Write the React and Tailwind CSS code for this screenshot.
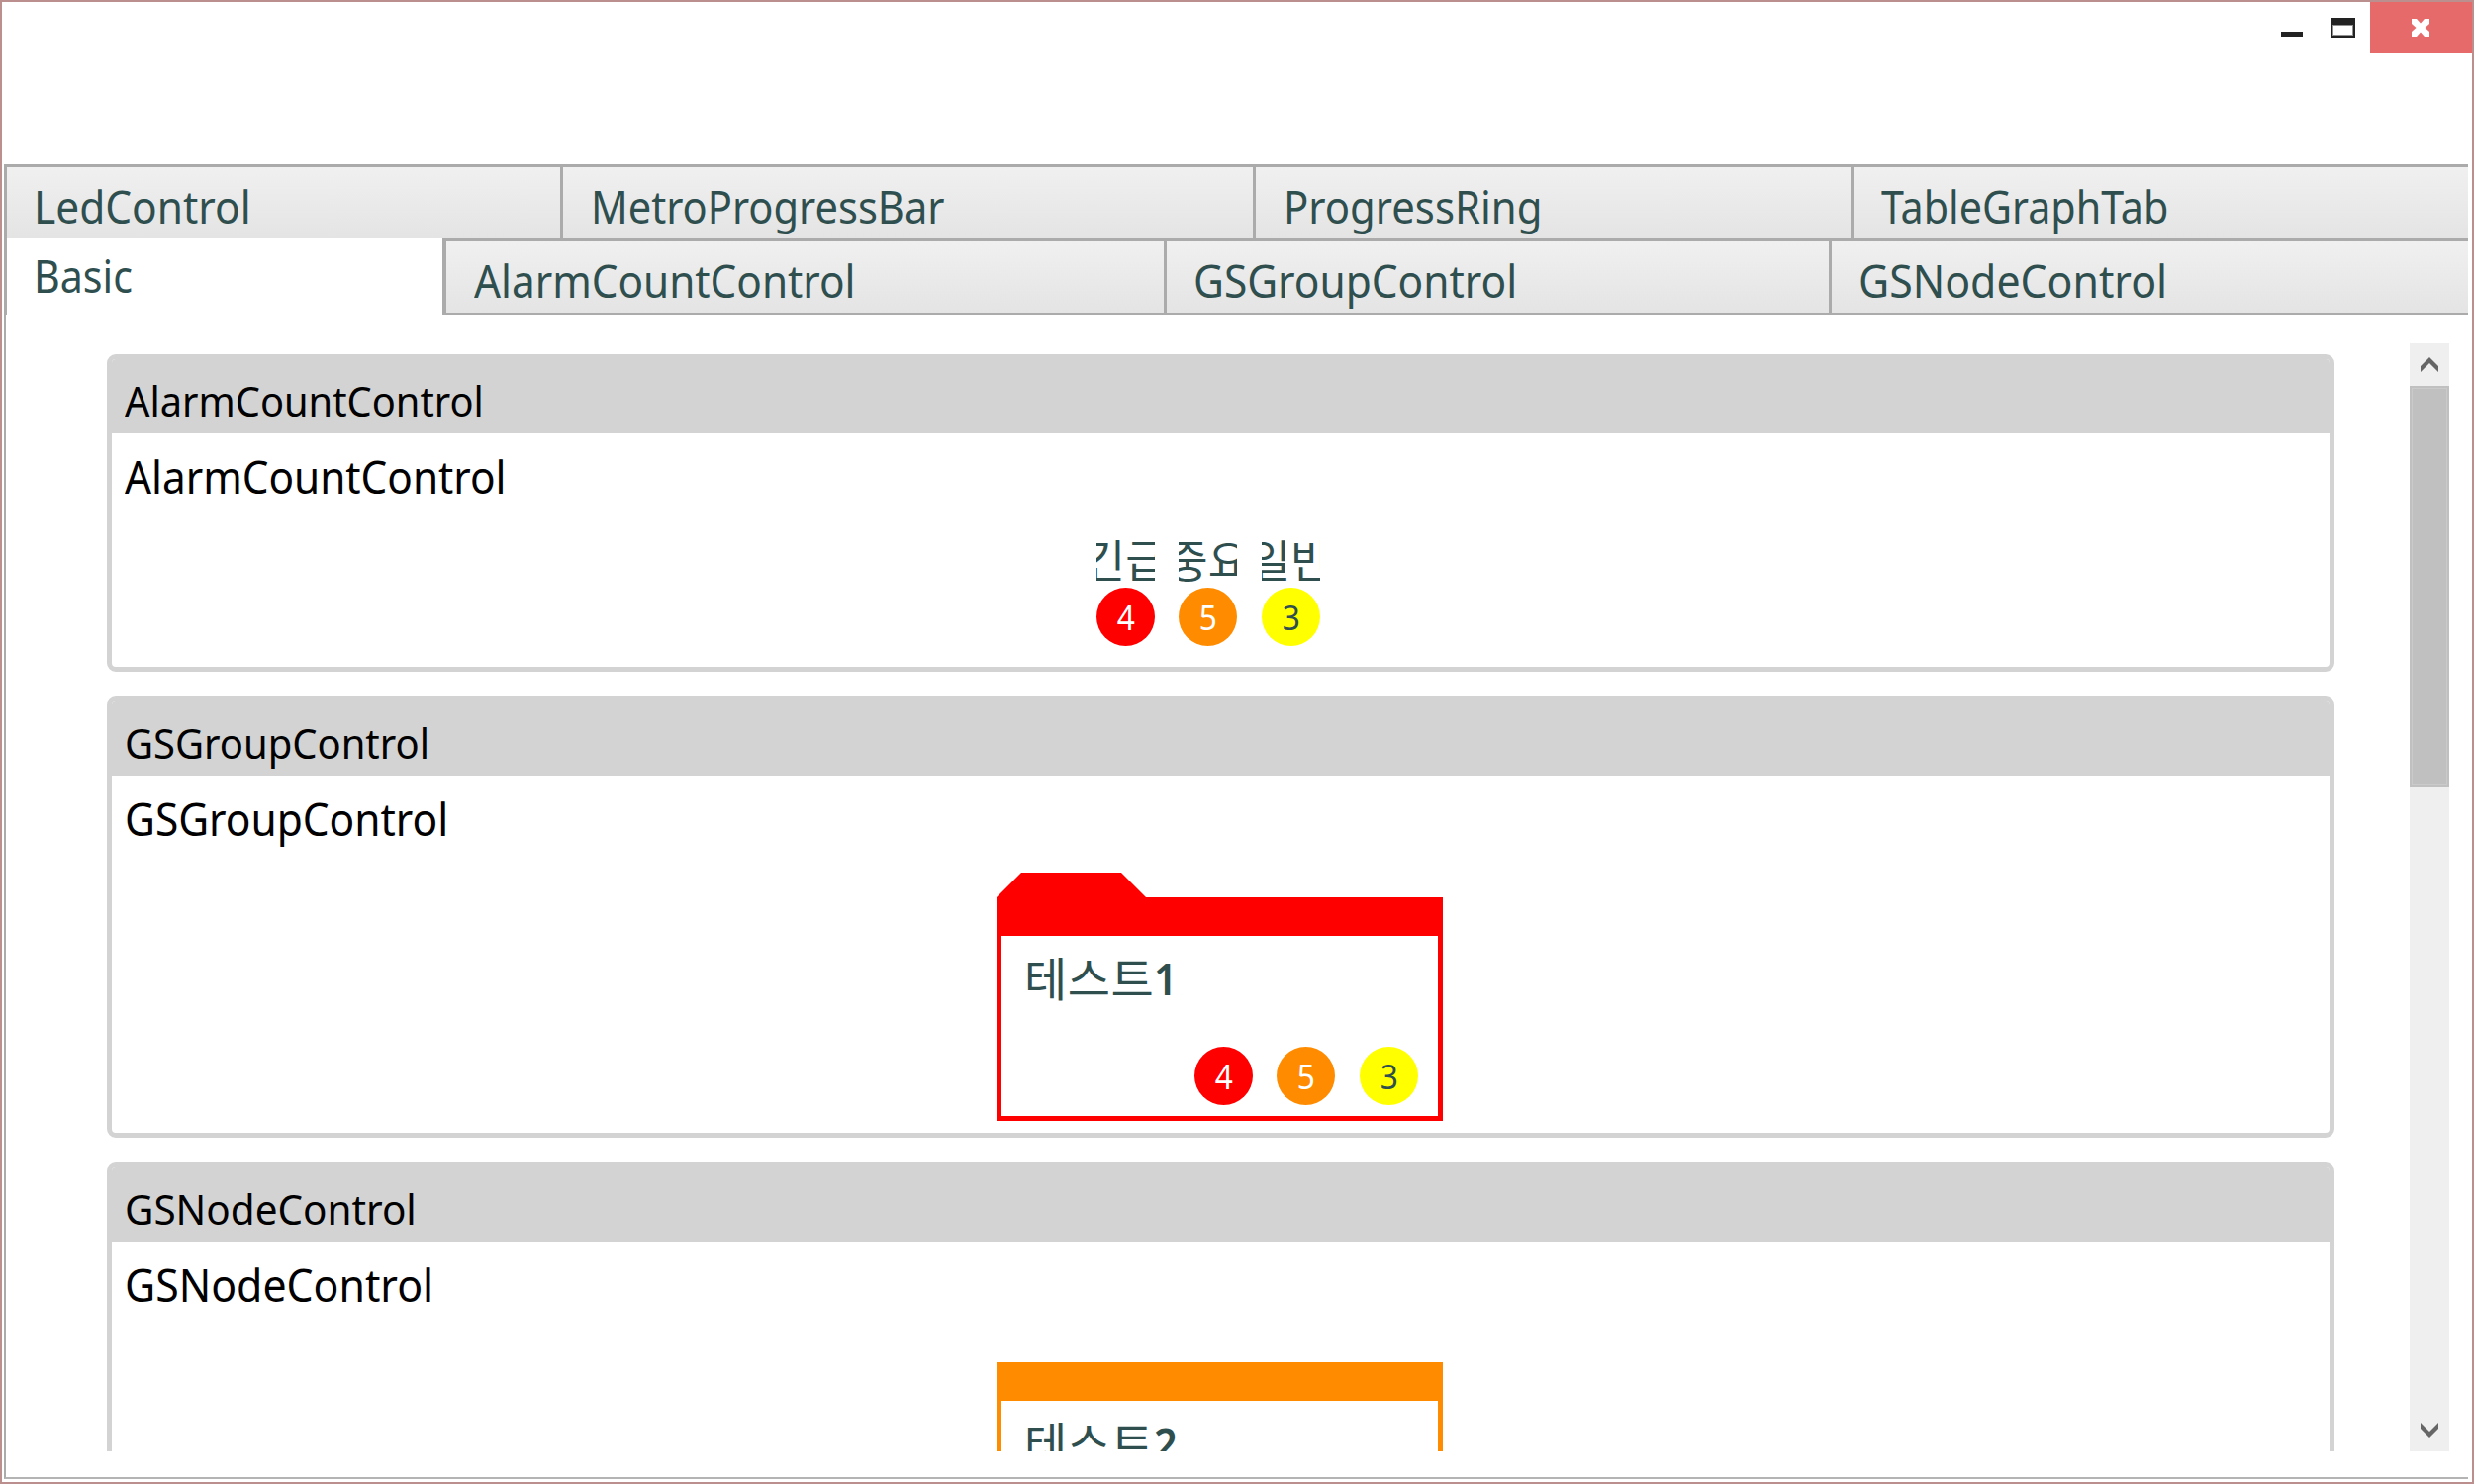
const rowOne = [
  { label: "LedControl", width: "w-[559px]", text: "ml-[27px] scale-x-[0.943]", edge: "" },
  { label: "MetroProgressBar", width: "w-[700px]", text: "ml-[28px] scale-x-[0.925]", edge: "border-l-[3px]" },
  { label: "ProgressRing", width: "w-[604px]", text: "ml-[28px] scale-x-[0.93]", edge: "border-l-[3px]" },
  { label: "TableGraphTab", width: "flex-1", text: "ml-[28px] scale-x-[0.916]", edge: "border-l-[3px]" },
];

const rowTwo = [
  { label: "AlarmCountControl", width: "w-[729px]", text: "ml-[28px] scale-x-[0.94]", edge: "border-l-4" },
  { label: "GSGroupControl", width: "w-[672px]", text: "ml-[27px] scale-x-[0.943]", edge: "border-l-[3px]" },
  { label: "GSNodeControl", width: "flex-1", text: "ml-[27px] scale-x-[0.951]", edge: "border-l-[3px]" },
];

const alarms = [
  { label: "긴급", count: 4, color: "bg-[#ff0000] text-white" },
  { label: "중요", count: 5, color: "bg-[#ff8c00] text-white" },
  { label: "일반", count: 3, color: "bg-[#ffff00] text-[#2f4f4f]" },
];

function Tab({ label, width, text, edge }) {
  return (
    <div className={`flex items-center border-[#ababab] bg-linear-to-b from-[#f0f0f0] to-[#e4e4e4] pt-[7px] ${width} ${edge}`}>
      <span className={`origin-left whitespace-nowrap ${text}`}>{label}</span>
    </div>
  );
}

function TitleBar() {
  return (
    <div className="flex h-[164px] items-start justify-end">
      <svg className="h-[52px] w-[90px]" viewBox="2305 2 90 52" shapeRendering="crispEdges">
        <rect x="2305" y="32" width="22" height="5" fill="#222" />
        <rect x="2355" y="18" width="25" height="20" fill="#222" />
        <rect x="2357" y="25" width="21" height="11" fill="#909090" />
        <rect x="2358" y="26" width="19" height="9" fill="#fff" />
      </svg>
      <div className="flex h-[52px] w-[103px] items-center justify-center bg-[#e66a6a] pr-px">
        <svg className="h-[18px] w-[18px]" viewBox="0 0 18 18">
          <path d="M0 0H5L9 4.5L13 0H18V5L13.5 9L18 13V18H13L9 13.5L5 18H0V13L4.5 9L0 5Z" fill="#fff" />
        </svg>
      </div>
    </div>
  );
}

function Badges({ labels }) {
  return (
    <div className="flex w-[251px] gap-[25px]">
      {alarms.map((a) => (
        <div key={a.count} className="flex w-[58.5px] flex-col items-center">
          {labels && (
            <div className="flex h-[52px] w-[59px] justify-center overflow-hidden">
              <span className="shrink-0 whitespace-nowrap text-[45px] leading-[50px]">{a.label}</span>
            </div>
          )}
          <div className={`flex h-[59px] w-[59px] items-center justify-center rounded-full pt-[2px] text-[34px] leading-[57px] ${a.color}`}>
            <span className="scale-x-[0.93]">{a.count}</span>
          </div>
        </div>
      ))}
    </div>
  );
}

function Card({ title, height, header, body, children }) {
  return (
    <section className={`flex shrink-0 flex-col overflow-hidden rounded-[9px] border-[5px] border-[#d3d3d3] text-black ${height}`}>
      <h2 className="h-[75px] shrink-0 bg-[#d3d3d3] pt-[7px] pl-[13px] text-[42.5px] leading-[70px]">
        <span className={`inline-block origin-left ${header}`}>{title}</span>
      </h2>
      <p className="h-[86px] shrink-0 pl-[13px] text-[45px] leading-[88px]">
        <span className={`inline-block origin-left ${body}`}>{title}</span>
      </p>
      <div className="flex flex-col items-center text-[#2f4f4f]">{children}</div>
    </section>
  );
}

function Device({ name, digit, color, bar }) {
  return (
    <div className={`flex h-[226px] w-[451px] flex-col border-[5px] ${color}`}>
      <div className={`h-[34px] ${bar}`} />
      <div className="flex h-[90px] items-center pl-[23px] leading-[86px]">
        <span className="mb-1 text-[47px] tracking-[0.5px]">{name}</span>
        <span className="mb-1 origin-left scale-x-[0.92] text-[45px] font-semibold">{digit}</span>
      </div>
      <div className="flex pt-[22px] pl-[195px]">
        <Badges />
      </div>
    </div>
  );
}

export default function App() {
  return (
    <div className="flex h-[1500px] w-[2500px] flex-col border-2 border-[#bc8f8f] bg-white font-['Noto_Sans','Noto_Sans_CJK_KR',sans-serif] text-[45px] leading-[60px] text-[#2f4f4f]">
      <TitleBar />
      <div className="mr-1 ml-[2px] flex h-[152px] flex-col border-t-[3px] border-l-[3px] border-[#ababab]">
        <div className="flex h-[72px]">
          {rowOne.map((t) => (
            <Tab key={t.label} {...t} />
          ))}
        </div>
        <div className="flex h-[77px]">
          <div className="flex w-[440px] items-center pb-[2px]">
            <span className="ml-[27px] origin-left scale-x-[0.915]">Basic</span>
          </div>
          <div className="flex flex-1 border-t-[3px] border-b-2 border-[#ababab]">
            {rowTwo.map((t) => (
              <Tab key={t.label} {...t} />
            ))}
          </div>
        </div>
      </div>
      <div className="mr-1 mb-[3px] ml-[2px] flex min-h-0 flex-1 border-b-2 border-l-2 border-b-[#b4b4b4] border-l-[#ababab] pt-[29px] pb-[26px]">
        <div className="mr-[76px] ml-[102px] flex min-h-0 flex-1 flex-col gap-[25px] overflow-hidden pt-[11px]">
          <Card title="AlarmCountControl" height="h-[321px]" header="scale-x-[0.937]" body="scale-x-[0.94]">
            <div className="pt-[18px]">
              <Badges labels />
            </div>
          </Card>
          <Card title="GSGroupControl" height="h-[446px]" header="scale-x-[0.94]" body="scale-x-[0.943]">
            <div className="mr-[2px] flex flex-col pt-[12px]">
              <svg className="h-[25px] w-[151px]" viewBox="0 0 151 25">
                <path d="M0 25L25 0H126L151 25Z" fill="#ff0000" />
              </svg>
              <Device name="테스트" digit="1" color="border-[#ff0000]" bar="bg-[#ff0000]" />
            </div>
          </Card>
          <Card title="GSNodeControl" height="h-[446px]" header="scale-x-[0.951]" body="scale-x-[0.951]">
            <div className="mr-[2px] flex flex-col pt-[36px]">
              <Device name="테스트" digit="2" color="border-[#ff8c00]" bar="bg-[#ff8c00]" />
            </div>
          </Card>
        </div>
        <div className="mr-[19px] flex w-[40px] flex-col items-center bg-[#efefef]">
          <svg className="h-[43px] w-[18px]" viewBox="0 0 18 43">
            <path d="M0 29V23L9 14L18 23V29L9 20Z" fill="#666" />
          </svg>
          <div className="h-[405px] w-full bg-[#c0c0c0] p-[2px]">
            <div className="h-full border border-[#cacaca]" />
          </div>
          <div className="flex-1" />
          <svg className="h-[43px] w-[18px]" viewBox="0 0 18 43">
            <path d="M0 14V20L9 29L18 20V14L9 23Z" fill="#666" />
          </svg>
        </div>
      </div>
    </div>
  );
}
